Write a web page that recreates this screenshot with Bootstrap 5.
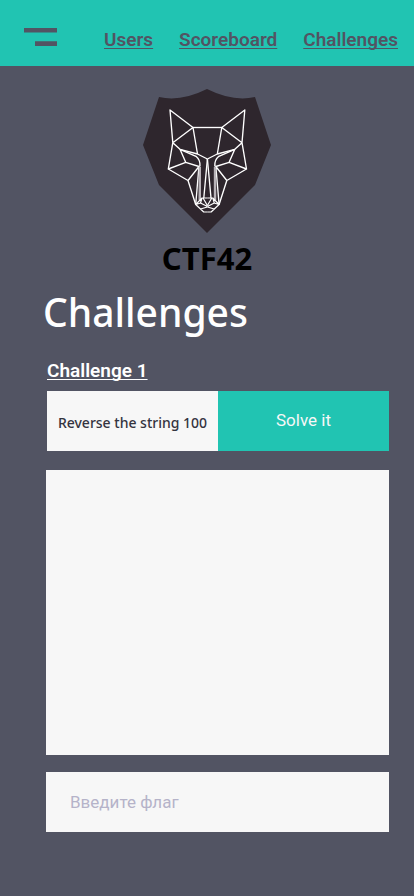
<!DOCTYPE html>
<html lang="en">
<head>
<meta charset="utf-8">
<meta name="viewport" content="width=device-width, initial-scale=1">
<title>CTF42 – Challenges</title>
<link rel="stylesheet" href="https://cdn.jsdelivr.net/npm/bootstrap@5.3.0/dist/css/bootstrap.min.css">
<style>
:root { --teal: #21c4b2; --slate: #525463; --paper: #f7f7f7; --ink: #2e262d; }
body { background: var(--slate); font-family: Roboto, "Liberation Sans", sans-serif; }
.topbar { background: var(--teal); height: 66px; padding: 0 16px 0 24px; }
.menu-btn { margin-top: 22px; }
.site-links { gap: 26px; padding-top: 28px; }
.site-links a, .task-link {
  font-size: 19px; font-weight: 600; line-height: 24px;
  text-decoration-thickness: 1px; text-underline-offset: 2px; text-decoration-skip-ink: none;
}
.site-links a { color: var(--slate); }
.brand-block { padding-top: 22px; }
.brand-name { color: #000; font: 700 31px/36px "Noto Sans", sans-serif; margin-top: 6px; }
.page { padding: 12px 25px 64px 46px; }
.page-title { font: 500 39px/48px "Noto Sans", sans-serif; margin: 0 0 23px -3px; }
.task { padding-left: 1px; }
.task-name { background: var(--paper); color: #34343f; font: 500 14px/20px "Noto Sans", sans-serif; }
.task-row { height: 60px; margin-bottom: 19px; }
.solve { background: var(--teal); color: var(--paper); font-size: 17px; }
.solve:hover { background: #1bb0a0; color: #fff; }
.answer { background: var(--paper); height: 285px; resize: none; margin-bottom: 17px; }
.flag { background: var(--paper); height: 60px; padding: 0 24px; font-size: 17px; }
.flag::placeholder { color: #b5b3c9; }
</style>
</head>
<body>
<header class="topbar d-flex justify-content-between align-items-start">
  <button type="button" class="menu-btn btn p-0 border-0 rounded-0" aria-label="Menu">
    <svg class="d-block" width="33" height="26" viewBox="0 0 33 26" fill="#525463"><path d="M0 6h33v4.600H0zM11 19.300h22v4.600H11z"/></svg>
  </button>
  <nav class="site-links d-flex">
    <a href="#users">Users</a><a href="#scoreboard">Scoreboard</a><a href="#challenges">Challenges</a>
  </nav>
</header>
<div class="brand-block text-center">
  <svg class="d-block mx-auto" width="130" height="146" viewBox="142 88 130 146" role="img" aria-label="Wolf shield">
    <path fill="#2e262d" d="M159 97Q181 102 207 89Q233 102 255 97L271 145L255 185L207 233L159 185L143 145Z"/>
    <g fill="none" stroke="#fff" stroke-width="1.350" stroke-linejoin="round">
      <path d="M193 127.500H222"/>
      <g id="half-face">
        <path d="M193 127.500L170 110L172.800 142.700L193 127.500L197.500 154M172.800 142.700L168.300 169L188 180.500L195.700 204.500M172.800 142.700L180 149.300L197.500 154L207.400 159"/>
        <path d="M180 149.300L185.700 162.300L168.300 169M185.700 162.300L199 166.500L188 180.500M180 149.300L196 156.300Q200.500 160 200 166.500M199 166L195.700 204.500M207.400 159L203.800 198"/>
        <path stroke="none" fill="#b9b4b9" d="M198.700 167H201V200H198.500Z"/>
        <path stroke-width="1.200" d="M207.400 198H202L195.700 204.500L203.700 212H207.400M202 198L200.500 203L207.400 206.500M200.500 203L196 204.500M203 198L207.400 205.500M207.400 207L200.500 209"/>
      </g>
      <use href="#half-face" transform="matrix(-1 0 0 1 414.800 0)"/>
    </g>
  </svg>
  <div class="brand-name">CTF42</div>
</div>
<main class="page">
  <h1 class="page-title text-white">Challenges</h1>
  <section class="task">
    <a class="task-link d-table mb-2 text-white" href="#challenge-1">Challenge 1</a>
    <div class="task-row row g-0">
      <div class="task-name col-6 d-flex align-items-center justify-content-center pt-1">Reverse the string 100</div>
      <button type="button" class="solve btn col-6 border-0 rounded-0">Solve it</button>
    </div>
  </section>
  <textarea class="answer form-control border-0 rounded-0" aria-label="Answer"></textarea>
  <input type="text" class="flag form-control border-0 rounded-0" placeholder="Введите флаг" aria-label="Введите флаг">
</main>
<script src="https://cdn.jsdelivr.net/npm/bootstrap@5.3.0/dist/js/bootstrap.bundle.min.js"></script>
</body>
</html>
